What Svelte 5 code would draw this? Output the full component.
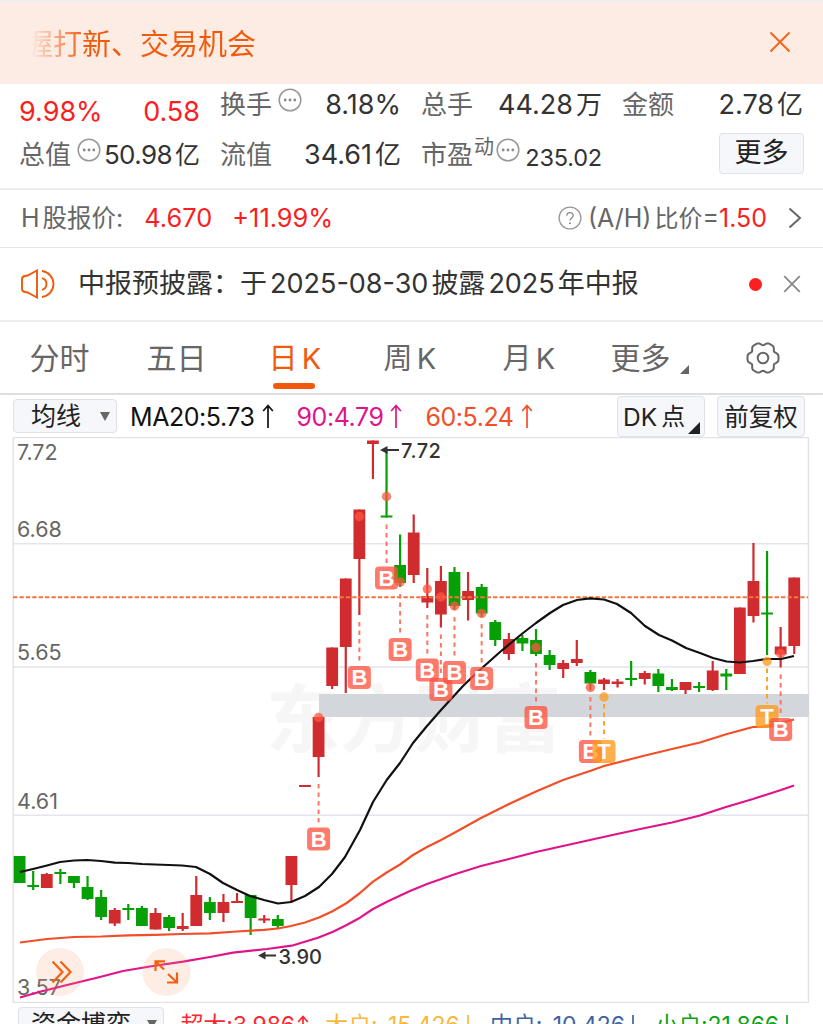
<script lang="ts">
	type Candle = [up: number, high: number, top: number, bottom: number, low: number];
	type Mark = { i: number; kind: string; dot: number; y: number };

	const STEP = 13.59;
	const x = (i: number) => 19.6 + STEP * i;

	// [rising, high, body top, body bottom, low]
	const candles: Candle[] = [
		[0, 856, 856, 883, 883],
		[0, 871, 885, 887, 890],
		[1, 873, 874, 888, 888],
		[0, 869, 872, 874, 884],
		[0, 876, 876, 883, 888],
		[0, 876, 887, 899, 900],
		[0, 890, 897, 917, 920],
		[1, 908, 910, 923.5, 926],
		[0, 904, 908, 910, 920],
		[0, 906, 908, 926, 926],
		[1, 908, 913, 929.5, 929.5],
		[0, 915, 917, 928, 931],
		[1, 913, 926, 929, 931],
		[1, 876, 895, 926, 926],
		[0, 897, 902, 913, 920],
		[1, 894, 902, 913, 922],
		[1, 893, 901, 903, 903],
		[0, 895, 895, 918, 935],
		[1, 915, 918.5, 920.5, 923],
		[0, 915, 919, 926, 928],
		[1, 856, 856, 885, 902],
		[1, 785, 785, 787, 787],
		[1, 717, 717, 757, 777],
		[1, 647.5, 647.5, 686, 689],
		[1, 578.5, 578.5, 647, 693],
		[1, 509.5, 509.5, 559, 615],
		[1, 440.5, 440.5, 444, 479],
		[0, 450, 515.5, 517.5, 517.5],
		[0, 534.5, 565, 583, 587],
		[1, 514.5, 532.5, 575, 583],
		[1, 568, 596, 602.5, 608],
		[1, 566, 581, 614.5, 627.5],
		[0, 567, 572, 606, 610],
		[1, 572, 591, 600, 620.5],
		[0, 584, 587, 613.5, 617],
		[0, 620, 622, 640, 646],
		[1, 633, 639, 654, 660],
		[0, 635, 638, 643.5, 651],
		[0, 629, 640, 654, 656],
		[0, 650, 655, 665, 670],
		[1, 660, 663, 669, 678],
		[1, 640, 659, 663, 666],
		[0, 670, 672, 683.5, 690],
		[1, 678, 679.5, 684, 690],
		[1, 679, 681.5, 684, 687.5],
		[0, 661, 678, 680, 686],
		[1, 671, 673, 679, 684.5],
		[0, 669, 673.5, 686, 692],
		[0, 679, 687, 690, 691],
		[1, 682, 682, 690, 694],
		[0, 682, 686, 688, 692],
		[1, 661, 670.5, 690, 691],
		[0, 669, 673.5, 676.5, 690],
		[1, 607.5, 607.5, 674, 674],
		[1, 543, 581, 616, 622.5],
		[0, 551, 612.5, 614.5, 655],
		[1, 627, 646.5, 654.5, 667.5],
		[1, 577.5, 577.5, 646, 654]
	];

	const marks: Mark[] = [
		{ i: 22, kind: 'B', dot: 717.5, y: 839 },
		{ i: 25, kind: 'B', dot: 516.5, y: 677.5 },
		{ i: 27, kind: 'B', dot: 496.5, y: 578 },
		{ i: 28, kind: 'B', dot: 582, y: 649.5 },
		{ i: 30, kind: 'B', dot: 589, y: 670 },
		{ i: 31, kind: 'B', dot: 597, y: 689.5 },
		{ i: 32, kind: 'B', dot: 606, y: 672.5 },
		{ i: 34, kind: 'B', dot: 613.5, y: 678.5 },
		{ i: 38, kind: 'B', dot: 647.5, y: 717.5 },
		{ i: 42, kind: 'B', dot: 687.5, y: 751.5 },
		{ i: 43, kind: 'T', dot: 697, y: 751.5 },
		{ i: 55, kind: 'T', dot: 661.5, y: 716.5 },
		{ i: 56, kind: 'B', dot: 653.5, y: 729.5 }
	];

	// dashes start under whichever is lower, the dot or the wick
	const stemTop = (m: Mark) => Math.max(m.dot, candles[m.i][4]) + 7;

	const ma20 =
		'20,872 33,869 47,865.5 60,862 74,860.5 87,860 101,861 115,862.7 128,863 142,864 155,864.5 169,865 182,865.5 196,867 210,874 223,883 237,890 250,896 264,900 278,903.5 291,902 305,896 319,887 332,874 345,857 360,830 373,802 386.7,780 400,763 413,743 427,726 441,710 463,686 477,672.5 500,652 523,633 536,623 550,613 563,605 577,600 590,598.3 604,599.5 617,604 631,613 645,626 659,635 672,640.5 686,648 700,653 713,658 726.7,661.5 740,662.5 753,661 767,659 781,659 794,656';
	const ma60 =
		'20,942.5 47,939 74,937 101,936.5 128,935.3 155,934.8 182,934 210,933.3 237,931.5 264,929.8 278,928.5 291,926 305,922.5 319,917.5 332,911.5 346.7,903 360,893 373,881.7 386.7,872.5 400,864.5 413,855 427,847 441,840 454,833 481,818 509,804 536,791.5 563,780 590,771 604,766 643,756 672,749 700,742.5 727,734 753,727 767,726.5 780,723 794,719.5';
	const ma90 =
		'20,997.5 40,991.7 67,985 97,977.7 123,971 153,966 183,961.7 210,957 233,952.7 267,949 291.7,945.7 318,937.7 333,931.7 346.7,925 360,917.7 373,909 387,901.7 410,891 427,884 454,874.5 481,866 509,859 536,852 563,846 590,840 617,834 645,828 672,822.5 700,815.5 726,807 753,799 781,790 794,785.5';

	// six rounded teeth
	const gear =
		Array.from({ length: 72 }, (_, k) => {
			const a = (k * Math.PI) / 36;
			const r = 14.6 + 1.4 * Math.cos(6 * a) - 0.5 * Math.cos(12 * a);
			return `${k ? 'L' : 'M'}${(18 + r * Math.cos(a)).toFixed(2)} ${(18 + r * Math.sin(a)).toFixed(2)}`;
		}).join('') + 'Z';

	const tabs = ['分时', '五日', '日 K', '周 K', '月 K'];

	const averages = [
		{ text: 'MA20:5.73', tone: 'ink' },
		{ text: '90:4.79', tone: 'pink' },
		{ text: '60:5.24', tone: 'coral' }
	];

	const flows = [
		{ name: '超大:', value: '3.986', up: true, tone: 'red' },
		{ name: '大户:', value: '-15.426', up: false, tone: 'amber' },
		{ name: '中户:', value: '-10.426', up: false, tone: 'blue' },
		{ name: '小户:', value: '21.866', up: false, tone: 'green' }
	];
</script>

{#snippet dots()}
	<svg class="dots" width="24" height="24" viewBox="0 0 24 24">
		<circle cx="12" cy="12" r="10.8" fill="none" stroke="#999" stroke-width="1.5" />
		<circle cx="7.2" cy="12" r="1.4" fill="#888" />
		<circle cx="12" cy="12" r="1.4" fill="#888" />
		<circle cx="16.8" cy="12" r="1.4" fill="#888" />
	</svg>
{/snippet}

{#snippet arrow(up: boolean)}
	<svg class="arrow" width="12" height="24" viewBox="0 0 12 24">
		<path
			d={up ? 'M6 24V1.5M1.2 7L6 1.5L10.8 7' : 'M6 0V22.5M1.2 17L6 22.5L10.8 17'}
			fill="none"
			stroke="currentColor"
			stroke-width="1.7"
		/>
	</svg>
{/snippet}

<div class="screen">
	<header class="banner">
		<p class="ticker">握打新、交易机会</p>
		<svg width="22" height="22" viewBox="0 0 22 22">
			<path d="M1.5 1.5L20.5 20.5M20.5 1.5L1.5 20.5" stroke="#f2651c" stroke-width="2" />
		</svg>
	</header>

	<section class="stats">
		<div class="cell change"><b>9.98%</b><b>0.58</b></div>
		<div class="cell">
			<span class="label">换手{@render dots()}</span><b>8.18%</b>
		</div>
		<div class="cell"><span class="label">总手</span><b>44.28<i>万</i></b></div>
		<div class="cell"><span class="label">金额</span><b>2.78<i>亿</i></b></div>
		<div class="cell tight">
			<span class="label">总值{@render dots()}</span><b>50.98<i>亿</i></b>
		</div>
		<div class="cell"><span class="label">流值</span><b>34.61<i>亿</i></b></div>
		<div class="cell small">
			<span class="label">市盈<sup>动</sup>{@render dots()}</span><b>235.02</b>
		</div>
		<div class="cell end"><button class="more">更多</button></div>
	</section>

	<section class="hshare">
		<span class="h-name">H<i>股报价</i>:</span>
		<span class="h-price">4.670</span>
		<span class="h-rate">+11.99%</span>
		<svg class="help" width="24" height="24" viewBox="0 0 24 24">
			<circle cx="12" cy="12" r="10.9" fill="none" stroke="#999" stroke-width="1.3" />
			<path
				d="M8.8 9.7C8.8 5.6 15.2 5.7 15.2 9.5C15.2 12 12 12 12 14.6"
				fill="none"
				stroke="#888"
				stroke-width="1.3"
			/>
			<circle cx="12" cy="17.2" r="1" fill="#888" />
		</svg>
		<span class="ratio">(A/H)<i>比价</i>=<em>1.50</em></span>
		<svg class="chevron" width="14" height="22" viewBox="0 0 14 22">
			<path d="M1.5 1.5L12 11L1.5 20.5" fill="none" stroke="#666" stroke-width="2" />
		</svg>
	</section>

	<section class="notice">
		<svg width="36" height="30" viewBox="0 0 36 30" fill="none" stroke="#f05a0a" stroke-width="1.9">
			<path
				d="M2 10.5Q2 7.2 5 7Q8 6.8 10 5.2L17 1.5V28.5L10 24.8Q8 23.2 5 23Q2 22.8 2 19.5Z"
			/>
			<path d="M22 9.2A6 6 0 0 1 22 20.8M22 2A13.1 13.1 0 0 1 22 28" />
		</svg>
		<p>中报预披露：于<span class="date">2025-08-30</span>披露<span class="year">2025</span>年中报</p>
		<span class="unread"></span>
		<svg width="18" height="18" viewBox="0 0 18 18">
			<path d="M1.2 1.2L16.8 16.8M16.8 1.2L1.2 16.8" stroke="#888" stroke-width="1.8" />
		</svg>
	</section>

	<nav class="tabs">
		{#each tabs as tab, n}
			<span class="tab" class:active={n === 2}>{tab}</span>
		{/each}
		<span class="tab">
			更多
			<svg width="9" height="9" viewBox="0 0 9 9"><path d="M9 0V9H0Z" fill="#666" /></svg>
		</span>
		<svg class="gear" width="36" height="36" viewBox="0 0 36 36">
			<path d={gear} fill="none" stroke="#666" stroke-width="2" stroke-linejoin="round" />
			<circle cx="18" cy="18" r="5.3" fill="none" stroke="#666" stroke-width="2" />
		</svg>
	</nav>

	<section class="toolbar">
		<button class="select">
			均线
			<svg width="10" height="9" viewBox="0 0 10 9"><path d="M0 0H10L5 9Z" fill="#666" /></svg>
		</button>
		<div class="averages">
			{#each averages as a}
				<span class={a.tone}>{a.text}{@render arrow(true)}</span>
			{/each}
		</div>
		<button class="dk">
			DK<i>点</i>
			<svg width="12" height="12" viewBox="0 0 12 12"><path d="M12 0V12H0Z" fill="#222" /></svg>
		</button>
		<button class="adjust">前复权</button>
	</section>

	<svg class="chart" width="823" height="566" viewBox="0 437 823 566">
		<text class="watermark" x="266" y="746">东方财富</text>
		<g stroke="#e2e5ec" stroke-width="1.6">
			<path d="M13 543.7H808M13 667H808M13 815.3H808" />
		</g>
		<rect x="13.3" y="437.5" width="795.2" height="565" fill="none" stroke="#e2e3e8" stroke-width="1.5" />
		<rect x="319" y="694" width="490" height="23" fill="#d3d6db" />

		<text class="axis" x="17" y="460">7.72</text>
		<text class="axis" x="17" y="537">6.68</text>
		<text class="axis" x="17" y="660">5.65</text>
		<text class="axis" x="17" y="808.5">4.61</text>
		<text class="axis" x="17" y="995">3.57</text>

		{#each candles as [up, high, top, bottom, low], i}
			<g fill={up ? '#d02c2f' : '#06a006'}>
				<rect x={x(i) - 1.1} y={high} width="2.2" height={low - high} />
				<rect x={x(i) - 5.9} y={top} width="11.8" height={bottom - top} />
			</g>
		{/each}

		<path d="M13 597.2H808" stroke="#f3763a" stroke-width="2" stroke-dasharray="4.4 2" />

		<g fill="none" stroke-width="2.2" stroke-linejoin="round">
			<polyline points={ma20} stroke="#111" />
			<polyline points={ma60} stroke="#f24e28" />
			<polyline points={ma90} stroke="#e0148a" />
		</g>

		{#each marks as m}
			<g class:take={m.kind === 'T'} class="mark">
				<circle cx={x(m.i)} cy={m.dot} r="4.7" />
				<path d="M{x(m.i)} {stemTop(m)}V{m.y - 13}" />
				<rect x={x(m.i) - 11.5} y={m.y - 11.5} width="23" height="23" rx="4" />
				<text x={x(m.i)} y={m.y + 7.7}>{m.kind}</text>
			</g>
		{/each}

		<g class="callout">
			<path d="M385 450H399" />
			<path d="M380 450L387.5 446V454Z" fill="#333" stroke="none" />
			<text x="401" y="457.5" letter-spacing="0.5">7.72</text>
			<path d="M263 955.5H276" />
			<path d="M258 955.5L265.5 951.5V959.5Z" fill="#333" stroke="none" />
			<text x="278.5" y="963.5">3.90</text>
		</g>

		<g fill="none" stroke="#f2600f" stroke-width="2.2">
			<circle cx="60" cy="972" r="24" fill="#f99a67" fill-opacity=".18" stroke="none" />
			<path d="M52.5 961.5L62.5 972L52.5 982.5M60.5 961.5L70.5 972L60.5 982.5" />
			<circle cx="166.5" cy="972" r="24" fill="#f99a67" fill-opacity=".18" stroke="none" />
			<path d="M155.5 971V961.3H165M155.5 961.3L164 969.5M177 972.5V982.5H167M168 974L177 982.5" />
		</g>
	</svg>

	<footer class="flows">
		<button class="select wide">
			资金博弈
			<svg width="10" height="9" viewBox="0 0 10 9"><path d="M0 0H10L5 9Z" fill="#666" /></svg>
		</button>
		{#each flows as f}
			<span class="flow {f.tone}">{f.name}<span>{f.value}</span>{@render arrow(f.up)}</span>
		{/each}
	</footer>
</div>

<style>
	:global(body) {
		background: #fff;
	}

	.screen {
		width: 823px;
		height: 1024px;
		overflow: hidden;
		display: flex;
		flex-direction: column;
		box-sizing: border-box;
		border-top: 2px solid #eeeef0;
		color: #333;
		font-family: Inter, 'Noto Sans CJK SC', sans-serif;
		font-weight: 400;
	}

	.screen > * {
		flex: none;
		box-sizing: border-box;
	}

	b,
	i,
	em {
		font-weight: 400;
		font-style: normal;
	}

	p {
		margin: 0;
	}

	svg {
		display: block;
		flex: none;
	}

	button {
		box-sizing: border-box;
		padding: 0;
		border: 1.5px solid #dfe1e8;
		border-radius: 4px;
		background: #f6f7fa;
		color: #222;
		font: inherit;
	}

	.banner {
		height: 82px;
		padding: 0 32px 2px;
		display: flex;
		align-items: center;
		justify-content: space-between;
		background: #fdece4;
	}

	.ticker {
		padding-top: 5px;
		margin-left: -8px;
		font-size: 29px;
		line-height: 40px;
		background: linear-gradient(90deg, rgba(240, 90, 10, 0) 6px, #f05a0a 62px);
		background-clip: text;
		color: transparent;
	}

	.stats {
		height: 106px;
		padding: 0 19px;
		display: grid;
		grid-template-columns: repeat(4, 181px);
		grid-template-rows: 42px 50px;
		column-gap: 20px;
		row-gap: 4px;
		border-bottom: 2px solid #ededf0;
	}

	.cell {
		display: flex;
		align-items: center;
		justify-content: space-between;
		white-space: nowrap;
		line-height: 40px;
	}

	.cell b {
		font-size: 27px;
	}

	.cell b i {
		margin-left: 3px;
		font-size: 26px;
	}

	.change {
		padding-top: 14px;
		color: #fa1e23;
	}

	.label {
		display: flex;
		align-items: center;
		font-size: 26px;
		color: #666;
	}

	.label .dots {
		margin: -11px 0 0 6px;
	}

	.tight b {
		font-size: 26px;
		letter-spacing: -0.6px;
	}

	.tight b i {
		letter-spacing: 0;
		font-size: 25px;
	}

	.small b {
		padding-top: 5px;
		font-size: 23.5px;
		letter-spacing: -0.2px;
	}

	.small .label .dots {
		margin-left: 2px;
	}

	.label sup {
		margin: -16px 0 0 1px;
		font-size: 20px;
		line-height: 30px;
		vertical-align: baseline;
	}

	.end {
		justify-content: flex-end;
	}

	.more {
		width: 85px;
		height: 41px;
		margin: -4px -1px 0 0;
		font-size: 27px;
		line-height: 36px;
	}

	.hshare {
		height: 58px;
		padding: 0 21px;
		display: flex;
		align-items: center;
		border-bottom: 1.5px solid #e4e5e8;
		color: #666;
		font-size: 25px;
		line-height: 38px;
		padding-bottom: 1px;
	}

	.h-name i {
		margin: 0 0 0 3px;
		font-size: 24.5px;
	}

	.h-price {
		margin-left: 21px;
		font-size: 25.4px;
		color: #fa1e23;
	}

	.h-rate {
		margin-left: 20px;
		font-size: 25.4px;
		color: #fa1e23;
	}

	.help {
		margin-left: auto;
	}

	.ratio {
		margin-left: 6px;
	}

	.ratio i {
		margin-left: 3px;
		font-size: 24px;
	}

	.ratio em {
		color: #fa1e23;
	}

	.chevron {
		margin-left: 21px;
	}

	.notice {
		height: 74px;
		padding: 0 22px 0 20px;
		display: flex;
		align-items: center;
		border-bottom: 2px solid #ededf0;
		font-size: 27px;
		line-height: 40px;
		white-space: nowrap;
	}

	.notice p {
		margin-left: 22px;
	}

	.date,
	.year {
		margin: 0 3px;
	}

	.unread {
		width: 13px;
		height: 13px;
		margin: 0 21px 0 auto;
		border-radius: 50%;
		background: #f9201f;
	}

	.tabs {
		height: 73px;
		padding-left: 29px;
		display: grid;
		grid-template-columns: 117px 122px 115px 119px 108px 135px 1fr;
		align-items: center;
		border-bottom: 2px solid #dcdee4;
		color: #666;
		font-size: 30px;
		line-height: 73px;
		white-space: nowrap;
		word-spacing: -4px;
	}

	.tab {
		display: flex;
		margin-left: 0.5px;
	}

	.tab:nth-child(n + 3):nth-child(-n + 5) {
		font-size: 29px;
	}

	.tab svg {
		margin: 43px 0 0 9px;
	}

	.gear {
		margin-top: -2px;
	}

	.active {
		position: relative;
		color: #f05a0a;
	}

	.active::after {
		content: '';
		position: absolute;
		left: 4px;
		bottom: 6px;
		width: 42px;
		height: 6px;
		border-radius: 3px;
		background: #f05a0a;
	}

	.toolbar {
		height: 42px;
		padding: 0 18px 0 13px;
		display: flex;
		align-items: center;
	}

	.select {
		width: 104px;
		height: 34px;
		padding: 0 6px 0 17px;
		display: flex;
		align-items: center;
		justify-content: space-between;
		font-size: 25px;
		line-height: 31px;
	}

	.averages {
		flex: 1;
		padding-top: 2px;
		margin-left: 13px;
		display: flex;
		gap: 23px;
		font-size: 25px;
		line-height: 38px;
		letter-spacing: -0.45px;
	}

	.averages span {
		display: flex;
		align-items: center;
	}

	.arrow {
		margin-left: 7px;
	}

	.averages .arrow {
		margin-top: -2px;
	}

	.ink {
		color: #111;
	}

	.pink {
		color: #e0148a;
	}

	.coral {
		color: #f24e28;
	}

	.dk,
	.adjust {
		height: 41px;
		font-size: 24.5px;
		line-height: 40px;
	}

	.dk {
		width: 88px;
		padding: 0 4px 0 5px;
		display: flex;
	}

	.dk i {
		margin-left: 4px;
		font-size: 24px;
	}

	.dk svg {
		margin: 25px 0 0 auto;
	}

	.adjust {
		width: 88px;
		margin-left: 12px;
	}

	.watermark {
		font-size: 74px;
		font-weight: 700;
		fill: #f6f6f7;
	}

	.axis {
		font-size: 21.5px;
		fill: #666;
	}

	.mark {
		fill: #ff5540;
		stroke: #ff7565;
	}

	.mark.take {
		fill: #ff9a1a;
		stroke: #ffa02c;
	}

	.mark circle {
		fill-opacity: 0.75;
		stroke: none;
	}

	.mark path {
		stroke-width: 2;
		stroke-dasharray: 4.5 4;
	}

	.mark rect {
		fill-opacity: 0.78;
		stroke: none;
	}

	.mark text {
		fill: #fff;
		stroke: none;
		font: 700 22px 'Liberation Sans', sans-serif;
		text-anchor: middle;
	}

	.callout {
		stroke: #333;
		stroke-width: 2;
	}

	.callout text {
		stroke: none;
		fill: #333;
		font-size: 20px;
		font-weight: 500;
	}

	.flows {
		height: 50px;
		padding: 4px 0 0 18px;
		display: flex;
		align-items: flex-start;
		font-size: 23px;
		line-height: 36px;
		letter-spacing: -0.15px;
		white-space: nowrap;
	}

	.wide {
		width: 146px;
		padding-left: 12px;
	}

	.flow {
		margin-left: 16.5px;
		display: flex;
	}

	.flow .arrow {
		margin: 8px 0 0 2px;
	}

	.red {
		color: #fa2830;
	}

	.amber {
		color: #fcb73a;
	}

	.blue {
		color: #40639f;
	}

	.green {
		color: #0ba312;
	}
</style>
